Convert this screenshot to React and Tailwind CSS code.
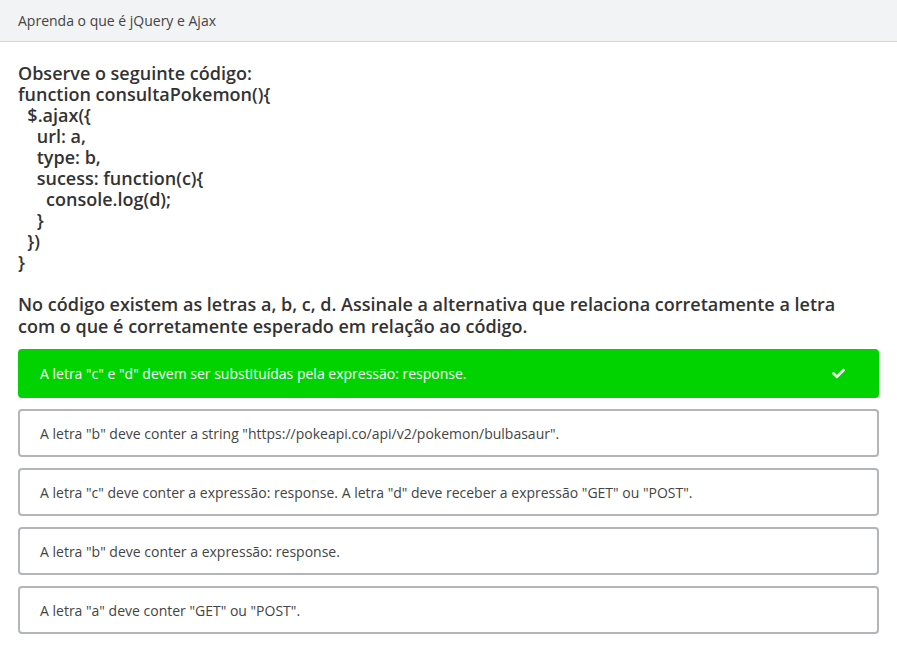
const options = [
  { text: 'A letra "c" e "d" devem ser substituídas pela expressão: response.', correct: true },
  { text: 'A letra "b" deve conter a string "https://pokeapi.co/api/v2/pokemon/bulbasaur".' },
  { text: 'A letra "c" deve conter a expressão: response. A letra "d" deve receber a expressão "GET" ou "POST".' },
  { text: 'A letra "b" deve conter a expressão: response.' },
  { text: 'A letra "a" deve conter "GET" ou "POST".' },
];

const code = [
  "function consultaPokemon(){",
  "\u00a0\u00a0$.ajax({",
  "\u00a0\u00a0\u00a0\u00a0url: a,",
  "\u00a0\u00a0\u00a0\u00a0type: b,",
  "\u00a0\u00a0\u00a0\u00a0sucess: function(c){",
  "\u00a0\u00a0\u00a0\u00a0\u00a0\u00a0console.log(d);",
  "\u00a0\u00a0\u00a0\u00a0}",
  "\u00a0\u00a0})",
  "}",
];

function Check() {
  return (
    <svg viewBox="0 0 512 512" className="w-[13px] h-[13px]" fill="white">
      <path d="M173.9 439.4l-166.4-166.4c-10-10-10-26.2 0-36.2l36.2-36.2c10-10 26.2-10 36.2 0L192 312.7 432.1 72.6c10-10 26.2-10 36.2 0l36.2 36.2c10 10 10 26.2 0 36.2l-294.4 294.4c-10 10-26.2 10-36.2 0z" />
    </svg>
  );
}

export default function App() {
  return (
    <div className="min-h-screen bg-white text-[#333] font-['Open_Sans',sans-serif]">
      {/* header */}
      <div className="h-[42px] bg-[#f2f3f4] border-b border-[#d3d5d7] flex items-center px-[18px]">
        <span className="text-[14px] text-[#444]">Aprenda o que é jQuery e Ajax</span>
      </div>

      <div className="px-[18px] pt-[21px]">
        <div className="text-[18px] font-semibold leading-[21px] text-[#333]">
          <p>Observe o seguinte código:</p>
          {code.map((line, i) => (
            <p key={i}>{line}</p>
          ))}
        </div>

        <p className="mt-[20px] pr-[30px] text-[18px] font-semibold leading-[22px] text-[#333]">
          No código existem as letras a, b, c, d. Assinale a alternativa que relaciona corretamente a letra com o
          que é corretamente esperado em relação ao código.
        </p>

        <div className="mt-[12px] flex flex-col gap-[11px]">
          {options.map((opt, i) =>
            opt.correct ? (
              <div
                key={i}
                className="h-[49px] rounded-[4px] bg-[#00d300] border-2 border-[#00d300] flex items-center justify-between pl-[20px] pr-[32px]"
              >
                <span className="text-[14px] text-white">{opt.text}</span>
                <Check />
              </div>
            ) : (
              <div
                key={i}
                className="h-[48px] rounded-[4px] border-2 border-[#b3b6b9] flex items-center pl-[20px]"
              >
                <span className="text-[14px] text-[#444]">{opt.text}</span>
              </div>
            )
          )}
        </div>
      </div>
    </div>
  );
}
